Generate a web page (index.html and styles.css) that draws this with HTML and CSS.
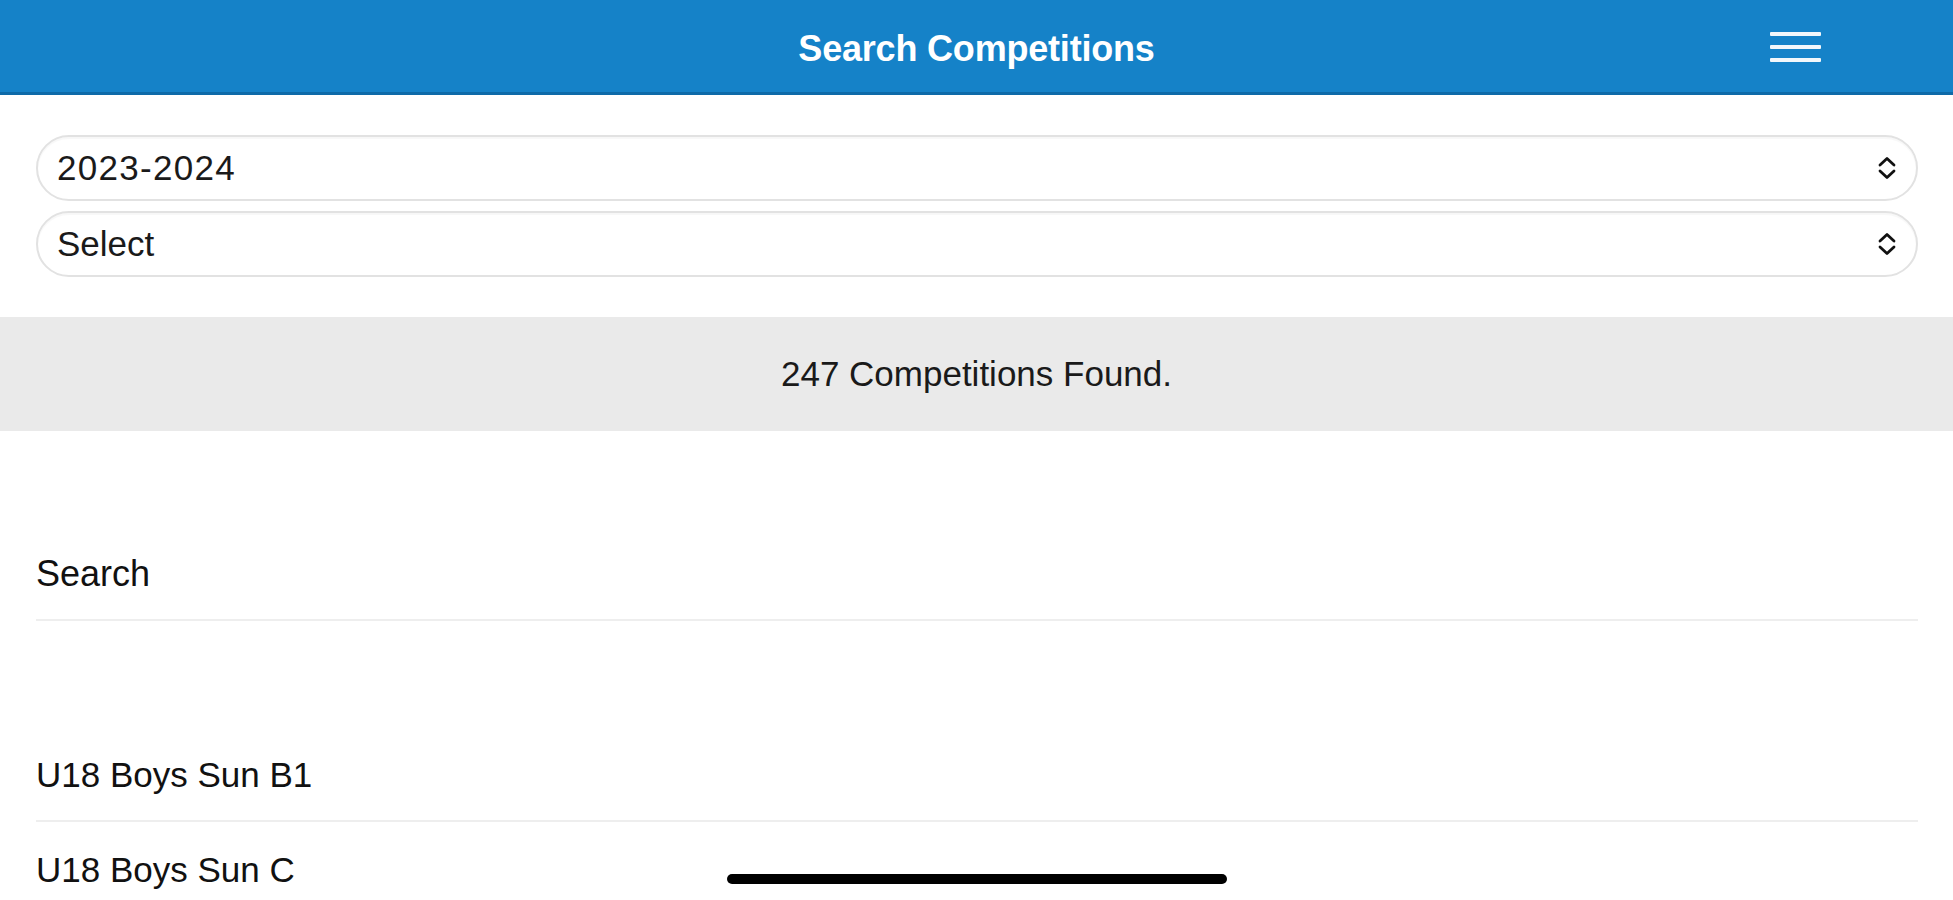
FILE: index.html
```html
<!DOCTYPE html>
<html lang="en">
<head>
<meta charset="utf-8">
<title>Search Competitions</title>
<link rel="stylesheet" href="styles.css">
</head>
<body>
<div class="screen">
  <header class="topbar">
    <div class="topbar-side"></div>
    <h1 class="topbar-title">Search Competitions</h1>
    <div class="topbar-side topbar-right">
      <button class="menu-btn" aria-label="Menu">
        <span class="menu-line"></span>
        <span class="menu-line"></span>
        <span class="menu-line"></span>
      </button>
    </div>
  </header>

  <section class="filters">
    <div class="select">
      <span class="select-value select-value-num">2023-2024</span>
      <svg class="select-arrow" viewBox="0 0 22 26" width="22" height="26"><path d="M4 10 L11 3.5 L18 10 M4 16 L11 22.5 L18 16" fill="none" stroke="#111" stroke-width="2.8" stroke-linecap="round" stroke-linejoin="round"/></svg>
    </div>
    <div class="select">
      <span class="select-value">Select</span>
      <svg class="select-arrow" viewBox="0 0 22 26" width="22" height="26"><path d="M4 10 L11 3.5 L18 10 M4 16 L11 22.5 L18 16" fill="none" stroke="#111" stroke-width="2.8" stroke-linecap="round" stroke-linejoin="round"/></svg>
    </div>
  </section>

  <div class="count-band">247 Competitions Found.</div>

  <div class="search-row">Search</div>

  <ul class="comp-list">
    <li class="comp-item">U18 Boys Sun B1</li>
    <li class="comp-item">U18 Boys Sun C</li>
  </ul>

  <div class="home-indicator"></div>
</div>
</body>
</html>
```

FILE: styles.css
```css
* { box-sizing: border-box; }

html, body {
  margin: 0;
  padding: 0;
  background: #ffffff;
}

body {
  font-family: "Liberation Sans", Arial, sans-serif;
  color: #111111;
}

.screen {
  position: relative;
  width: 1953px;
  height: 900px;
  overflow: hidden;
  background: #ffffff;
}

.topbar {
  height: 95px;
  background: #1582c8;
  border-bottom: 3px solid #0e6aa8;
  display: grid;
  grid-template-columns: 1fr auto 1fr;
  align-items: center;
  padding-top: 6px;
}

.topbar-title {
  margin: 0;
  font-size: 36px;
  line-height: 40px;
  font-weight: 700;
  color: #ffffff;
  letter-spacing: -0.2px;
}

.topbar-right {
  display: flex;
  justify-content: flex-end;
  padding-right: 132px;
}

.menu-btn {
  display: flex;
  flex-direction: column;
  gap: 9px;
  width: 51px;
  padding: 0;
  border: 0;
  background: transparent;
  margin-top: -4px;
}

.menu-line {
  display: block;
  height: 4px;
  width: 51px;
  background: #f2f7fb;
  border-radius: 1px;
}

.filters {
  display: flex;
  flex-direction: column;
  gap: 10px;
  padding: 40px 35px 0 36px;
}

.select {
  height: 66px;
  border: 2px solid #e2e2e2;
  border-radius: 33px;
  display: flex;
  align-items: center;
  justify-content: space-between;
  padding: 0 18px 0 19px;
  background: #ffffff;
  box-shadow: inset 0 2px 1px rgba(0, 0, 0, 0.03);
}

.select-value {
  font-size: 35px;
  line-height: 40px;
  color: #1a1a1a;
}

.select-value-num {
  letter-spacing: 1.3px;
}

.select-arrow {
  display: block;
}

.count-band {
  margin-top: 40px;
  height: 114px;
  background: #eaeaea;
  display: flex;
  align-items: center;
  justify-content: center;
  font-size: 35px;
  line-height: 40px;
  color: #1a1a1a;
}

.search-row {
  margin: 123px 35px 0 36px;
  font-size: 36px;
  line-height: 40px;
  padding-bottom: 25px;
  border-bottom: 2px solid #eeeeee;
}

.comp-list {
  list-style: none;
  margin: 106px 35px 0 36px;
  padding: 0;
}

.comp-item {
  font-size: 35px;
  line-height: 40px;
  padding: 28px 0 25px;
  border-bottom: 2px solid #eeeeee;
}

.home-indicator {
  position: absolute;
  left: 727px;
  top: 874px;
  width: 500px;
  height: 10px;
  border-radius: 5px;
  background: #000000;
}
```
